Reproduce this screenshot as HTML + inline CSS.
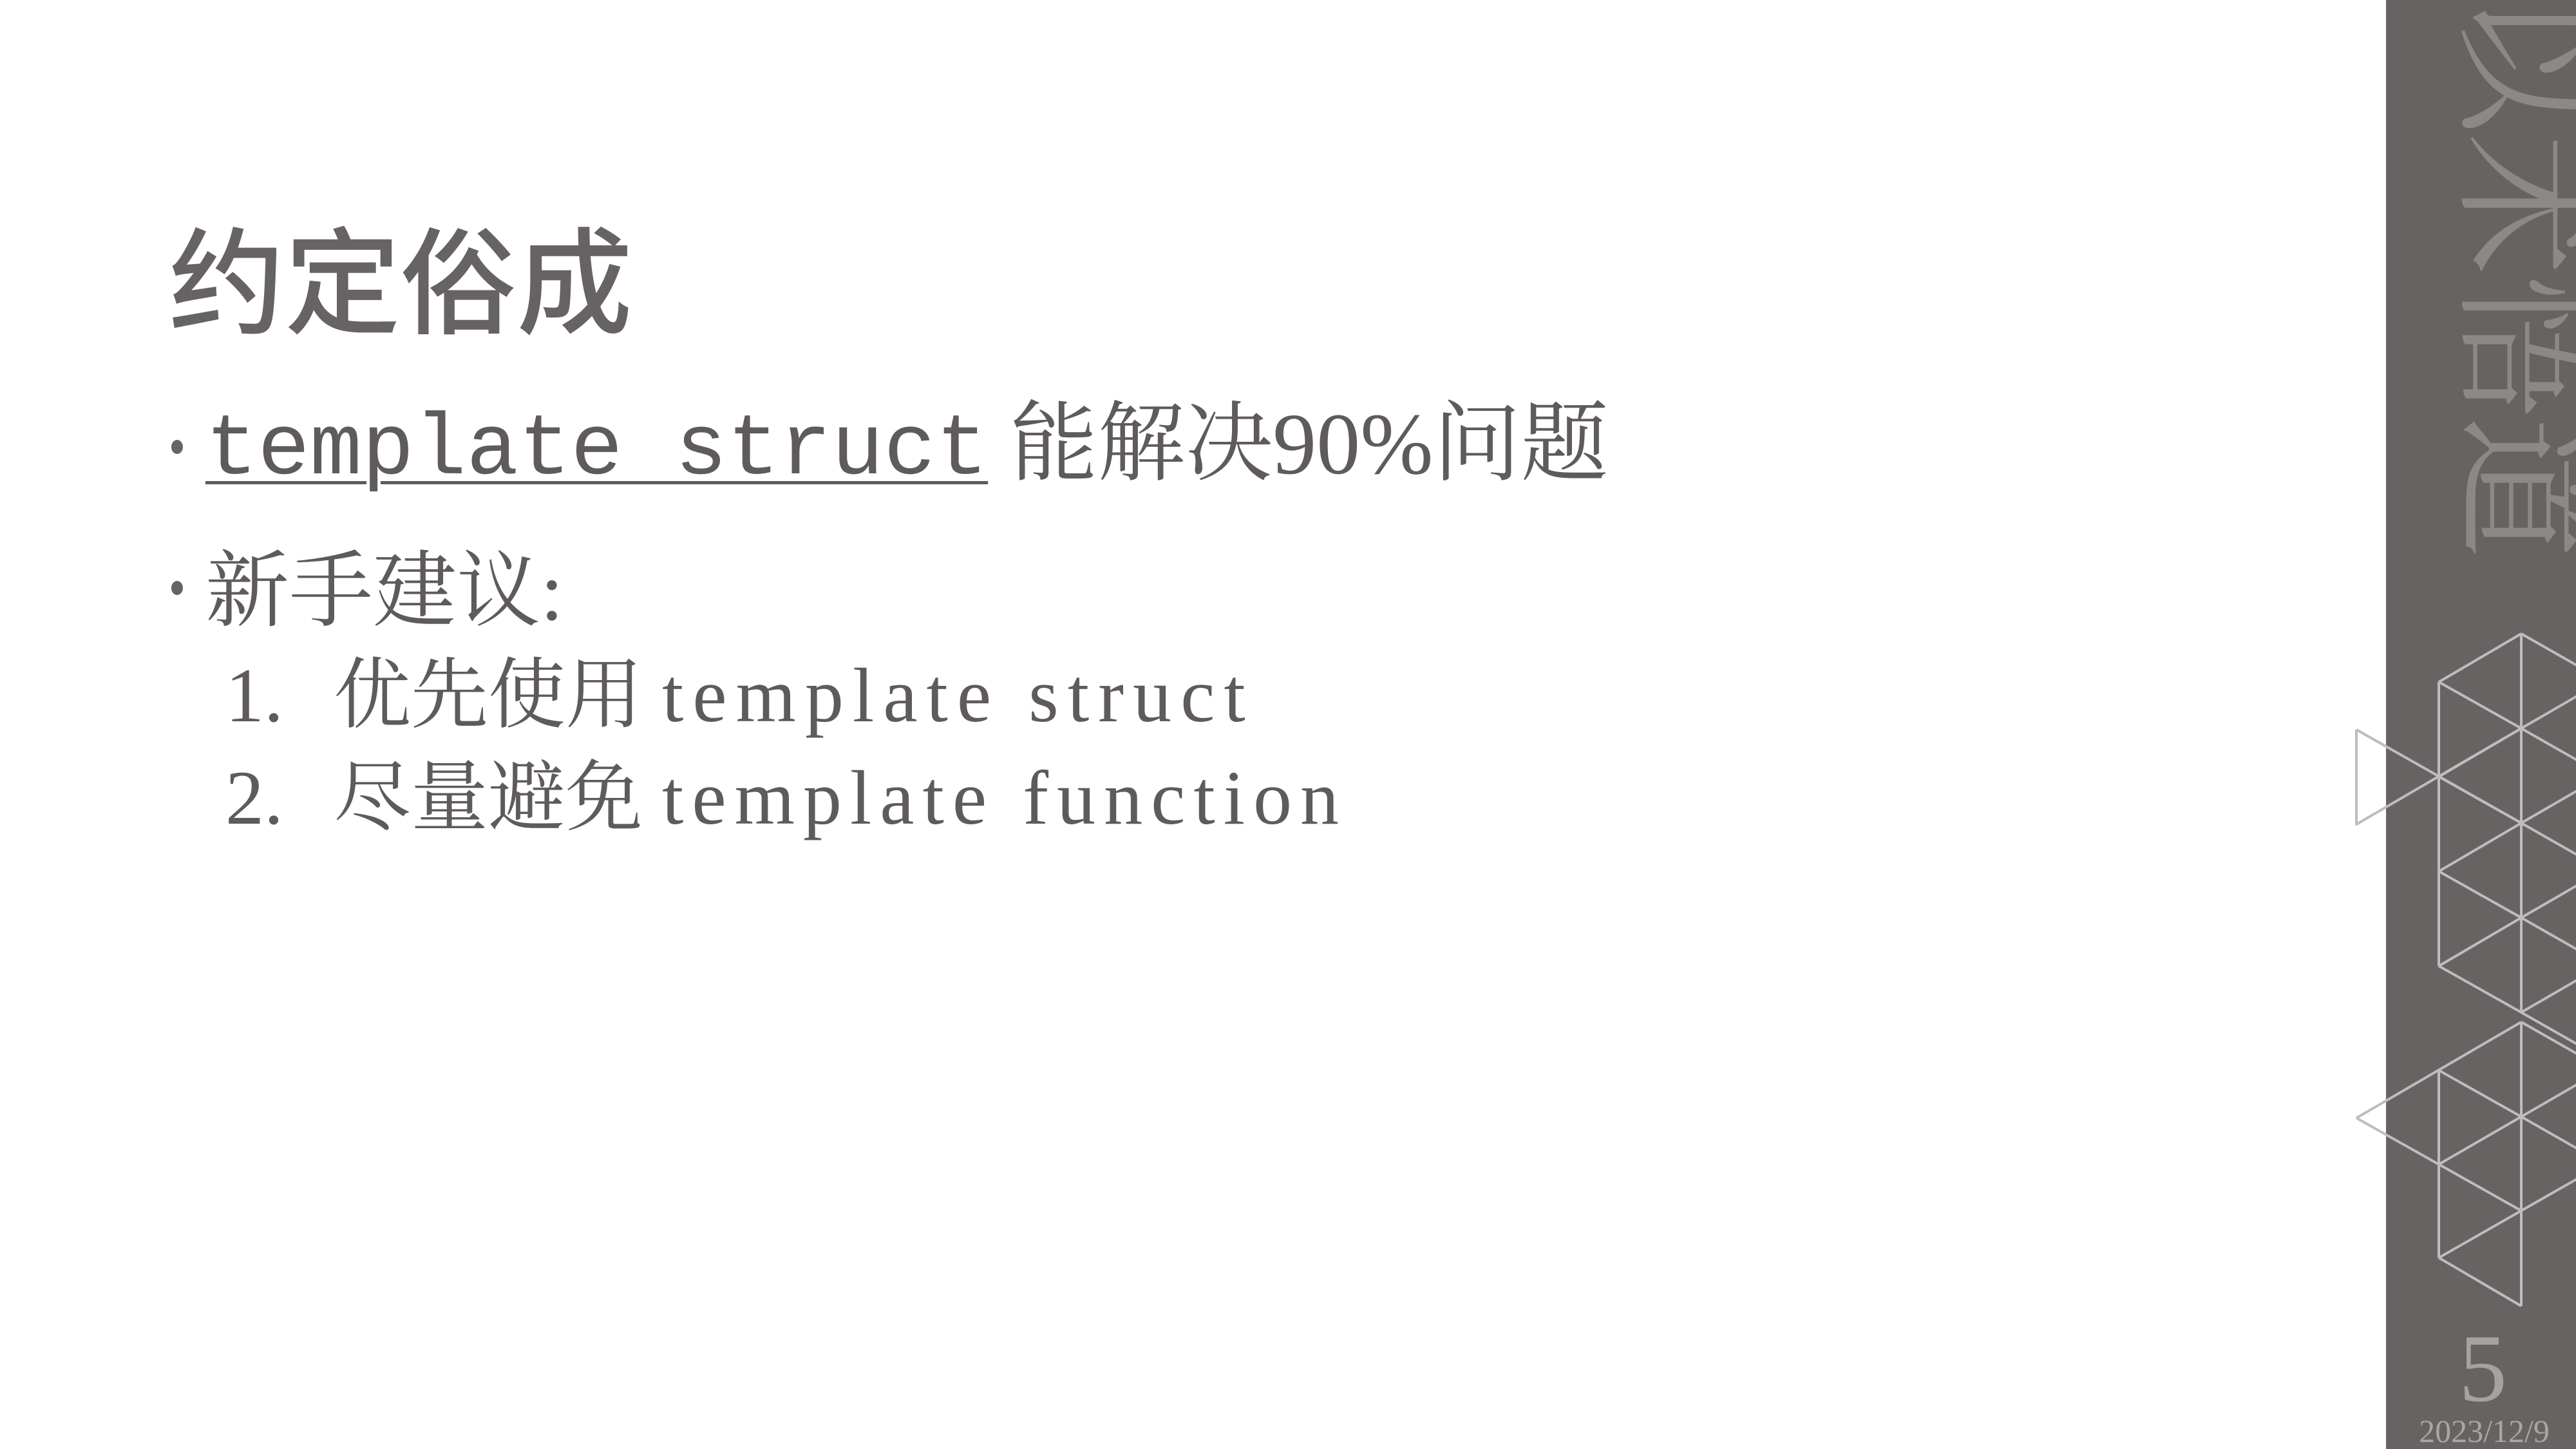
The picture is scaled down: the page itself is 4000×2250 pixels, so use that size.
<!DOCTYPE html>
<html><head><meta charset="utf-8"><style>
html,body{margin:0;padding:0;}
body{width:4000px;height:2250px;position:relative;overflow:hidden;background:#fff;}
.a{position:absolute;white-space:nowrap;line-height:1;}
.serif{font-family:"Liberation Serif","Noto Serif CJK SC",serif;}
.mono{font-family:"Liberation Mono","DejaVu Sans Mono",monospace;}
.dot{position:absolute;width:18px;height:22px;border-radius:50%;background:#676362;}
</style></head><body>
<div style="position:absolute;left:3705px;top:0;width:295px;height:2250px;background:#676362;"></div>
<div class="a" style="left:4045px;top:-13px;transform-origin:0 0;transform:rotate(90deg);font-family:'Noto Serif CJK SC',serif;font-size:220px;color:#8c8887;">以术悟道</div>
<svg style="position:absolute;left:0;top:0" width="4000" height="2250" fill="none" stroke="#bdbdbd" stroke-width="4" stroke-linejoin="round">
<path d="M3787 1059V1500 M3915 984V1572"/>
<path d="M3787 1059L3915 984 M3787 1059L3915 1131 M3787 1206L3915 1131 M3787 1206L3915 1278 M3787 1353L3915 1278 M3787 1353L3915 1425 M3787 1500L3915 1425 M3787 1500L3915 1572"/>
<path d="M3915 984L4043 1057 M3915 1131L4043 1057 M3915 1131L4043 1204 M3915 1278L4043 1204 M3915 1278L4043 1351 M3915 1425L4043 1351 M3915 1425L4043 1498 M3915 1572L4043 1498 M3915 1572L4043 1645"/>
<path d="M3659 1133V1280 L3915 1131 M3659 1133L3915 1278"/>
<path d="M3787 1662V1953 M3915 1587V2028"/>
<path d="M3659 1736L3915 1587 M3659 1736L3915 1880 M3787 1662L3915 1734 M3787 1808L3915 1734 M3787 1953L3915 1880 M3787 1953L3915 2028"/>
<path d="M3915 1587L4043 1660 M3915 1734L4043 1660 M3915 1734L4043 1807 M3915 1880L4043 1807"/>
</svg>
<div class="a serif" style="left:3818px;top:2050px;width:70px;text-align:center;font-size:150px;color:#a5a2a1;">5</div>
<div class="a serif" style="left:3745px;top:2197px;width:225px;text-align:center;font-size:50px;color:#a9a6a5;">2023/12/9</div>

<div class="a" style="left:262px;top:336px;font-family:'Noto Sans CJK SC',sans-serif;font-weight:500;font-size:180px;color:#676362;">约定俗成</div>

<div class="dot" style="left:266px;top:683px;"></div>
<div class="a" style="left:319px;top:622px;font-size:130px;color:#5f5b5a;"><span class="mono" style="font-size:135px;text-decoration:underline;text-decoration-thickness:5px;text-underline-offset:12px;">template struct</span><span class="serif" style="font-size:136px;"> 能解决90%问题</span></div>

<div class="dot" style="left:266px;top:902px;"></div>
<div class="a serif" style="left:319px;top:854px;font-size:130px;color:#5f5b5a;">新手建议:</div>

<div class="a serif" style="left:350px;top:1020px;font-size:120px;color:#5f5b5a;">1.<span style="display:inline-block;width:78px"></span>优先使用 <span style="letter-spacing:14px">template struct</span></div>
<div class="a serif" style="left:350px;top:1179px;font-size:120px;color:#5f5b5a;">2.<span style="display:inline-block;width:78px"></span>尽量避免 <span style="letter-spacing:13px">template function</span></div>
</body></html>
